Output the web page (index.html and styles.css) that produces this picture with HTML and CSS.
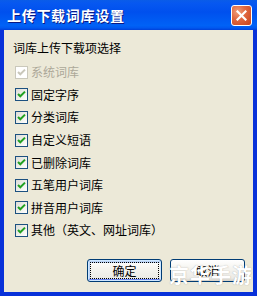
FILE: index.html
```html
<!DOCTYPE html>
<html>
<head>
<meta charset="utf-8">
<link rel="stylesheet" href="styles.css">
</head>
<body>
<div class="window">
  <div class="titlebar">
    <span class="title">上传下载词库设置</span>
    <span class="close"><svg width="11" height="11" viewBox="0 0 11 11"><path d="M1.5 1.5 L9.5 9.5 M9.5 1.5 L1.5 9.5" stroke="#fff" stroke-width="2.2" stroke-linecap="square"/></svg></span>
  </div>
  <div class="body">
    <div class="label">词库上传下载项选择</div>
    <div class="list">
      <div class="row disabled"><span class="cb"><svg width="11" height="11" viewBox="0 0 11 11"><path d="M2 5 L4.3 7.3 L9 2.6" fill="none" stroke="#c9c7ba" stroke-width="2"/></svg></span><span>系统词库</span></div>
      <div class="row"><span class="cb"><svg width="11" height="11" viewBox="0 0 11 11"><path d="M2 5 L4.3 7.3 L9 2.6" fill="none" stroke="#21a121" stroke-width="2"/></svg></span><span>固定字序</span></div>
      <div class="row"><span class="cb"><svg width="11" height="11" viewBox="0 0 11 11"><path d="M2 5 L4.3 7.3 L9 2.6" fill="none" stroke="#21a121" stroke-width="2"/></svg></span><span>分类词库</span></div>
      <div class="row"><span class="cb"><svg width="11" height="11" viewBox="0 0 11 11"><path d="M2 5 L4.3 7.3 L9 2.6" fill="none" stroke="#21a121" stroke-width="2"/></svg></span><span>自定义短语</span></div>
      <div class="row"><span class="cb"><svg width="11" height="11" viewBox="0 0 11 11"><path d="M2 5 L4.3 7.3 L9 2.6" fill="none" stroke="#21a121" stroke-width="2"/></svg></span><span>已删除词库</span></div>
      <div class="row"><span class="cb"><svg width="11" height="11" viewBox="0 0 11 11"><path d="M2 5 L4.3 7.3 L9 2.6" fill="none" stroke="#21a121" stroke-width="2"/></svg></span><span>五笔用户词库</span></div>
      <div class="row"><span class="cb"><svg width="11" height="11" viewBox="0 0 11 11"><path d="M2 5 L4.3 7.3 L9 2.6" fill="none" stroke="#21a121" stroke-width="2"/></svg></span><span>拼音用户词库</span></div>
      <div class="row"><span class="cb"><svg width="11" height="11" viewBox="0 0 11 11"><path d="M2 5 L4.3 7.3 L9 2.6" fill="none" stroke="#21a121" stroke-width="2"/></svg></span><span>其他（英文、网址词库）</span></div>
    </div>
    <div class="buttons">
      <div class="btn default"><span class="focus">确定</span></div>
      <div class="btn"><span class="focus none">取消</span></div>
    </div>
    <div class="watermark">京华手游</div>
  </div>
</div>
</body>
</html>
```

FILE: styles.css
```css
html, body {
  margin: 0;
  padding: 0;
  background: #ece9d8;
}
.window {
  width: 257px;
  height: 296px;
  box-sizing: border-box;
  display: flex;
  flex-direction: column;
  background: #0831d9;
  padding: 0 4px 4px 4px;
  position: relative;
  font-family: "Noto Sans CJK SC", "Liberation Sans", sans-serif;
}
.titlebar {
  height: 30px;
  margin: 0 -4px;
  display: flex;
  align-items: center;
  justify-content: space-between;
  padding: 0 5px 0 7px;
  box-sizing: border-box;
  background: linear-gradient(180deg, #0a5ce8 0%, #0758f0 10%, #0050ee 40%, #0062f6 85%, #0058f0 93%, #0040d8 100%);
}
.title {
  color: #fff;
  font-weight: bold;
  font-size: 14px;
  letter-spacing: 0.7px;
  line-height: 16px;
  text-shadow: 1px 1px 0 #0a1883;
}
.close {
  width: 19px;
  height: 19px;
  margin-top: 1px;
  border: 1px solid #fff;
  border-radius: 3px;
  display: flex;
  align-items: center;
  justify-content: center;
  background: radial-gradient(circle at 30% 30%, #f0a07c 0%, #e16a42 40%, #c8411a 100%);
}
.body {
  flex: 1;
  background: #ece9d8;
  display: flex;
  flex-direction: column;
  padding: 11px 0 0 9px;
  position: relative;
  font-size: 12px;
  color: #000;
}
.label {
  line-height: 14px;
  height: 14px;
}
.list {
  margin-top: 6px;
  display: grid;
  grid-auto-rows: 22.6px;
  padding-left: 2px;
}
.row {
  display: flex;
  align-items: center;
  gap: 3px;
  line-height: 14px;
}
.cb {
  width: 13px;
  height: 13px;
  box-sizing: border-box;
  border: 1px solid #1c5180;
  background: linear-gradient(135deg, #dcdcd7 0%, #f2f2ee 60%, #fff 100%);
  display: flex;
  align-items: center;
  justify-content: center;
}
.row.disabled {
  color: #aca899;
}
.row.disabled .cb {
  border-color: #cac8bb;
  background: #fff;
}
.buttons {
  margin-top: auto;
  margin-bottom: 10px;
  display: flex;
  justify-content: flex-end;
  gap: 8px;
  padding-right: 8px;
}
.btn {
  width: 75px;
  height: 23px;
  box-sizing: border-box;
  border: 1px solid #003c74;
  border-radius: 3px;
  background: linear-gradient(180deg, #fff 0%, #f5f4ef 40%, #ecebe6 86%, #d6d0c5 100%);
  display: flex;
  padding: 2px;
}
.btn.default {
  box-shadow: inset 0 0 0 1px #cee7ff, inset 0 -1px 0 1px #6982ee, inset 1px 2px 0 1px #bcd4f6;
}
.focus {
  flex: 1;
  border: 1px dotted #000;
  display: flex;
  align-items: center;
  justify-content: center;
  font-size: 12px;
  line-height: 14px;
}
.focus.none {
  border-color: transparent;
}
.watermark {
  position: absolute;
  left: 165px;
  top: 234px;
  white-space: nowrap;
  font-size: 20px;
  font-weight: bold;
  color: #fff;
  letter-spacing: 1px;
  line-height: 22px;
  text-shadow: 0 0 1px rgba(80, 80, 80, 0.5);
}
```
